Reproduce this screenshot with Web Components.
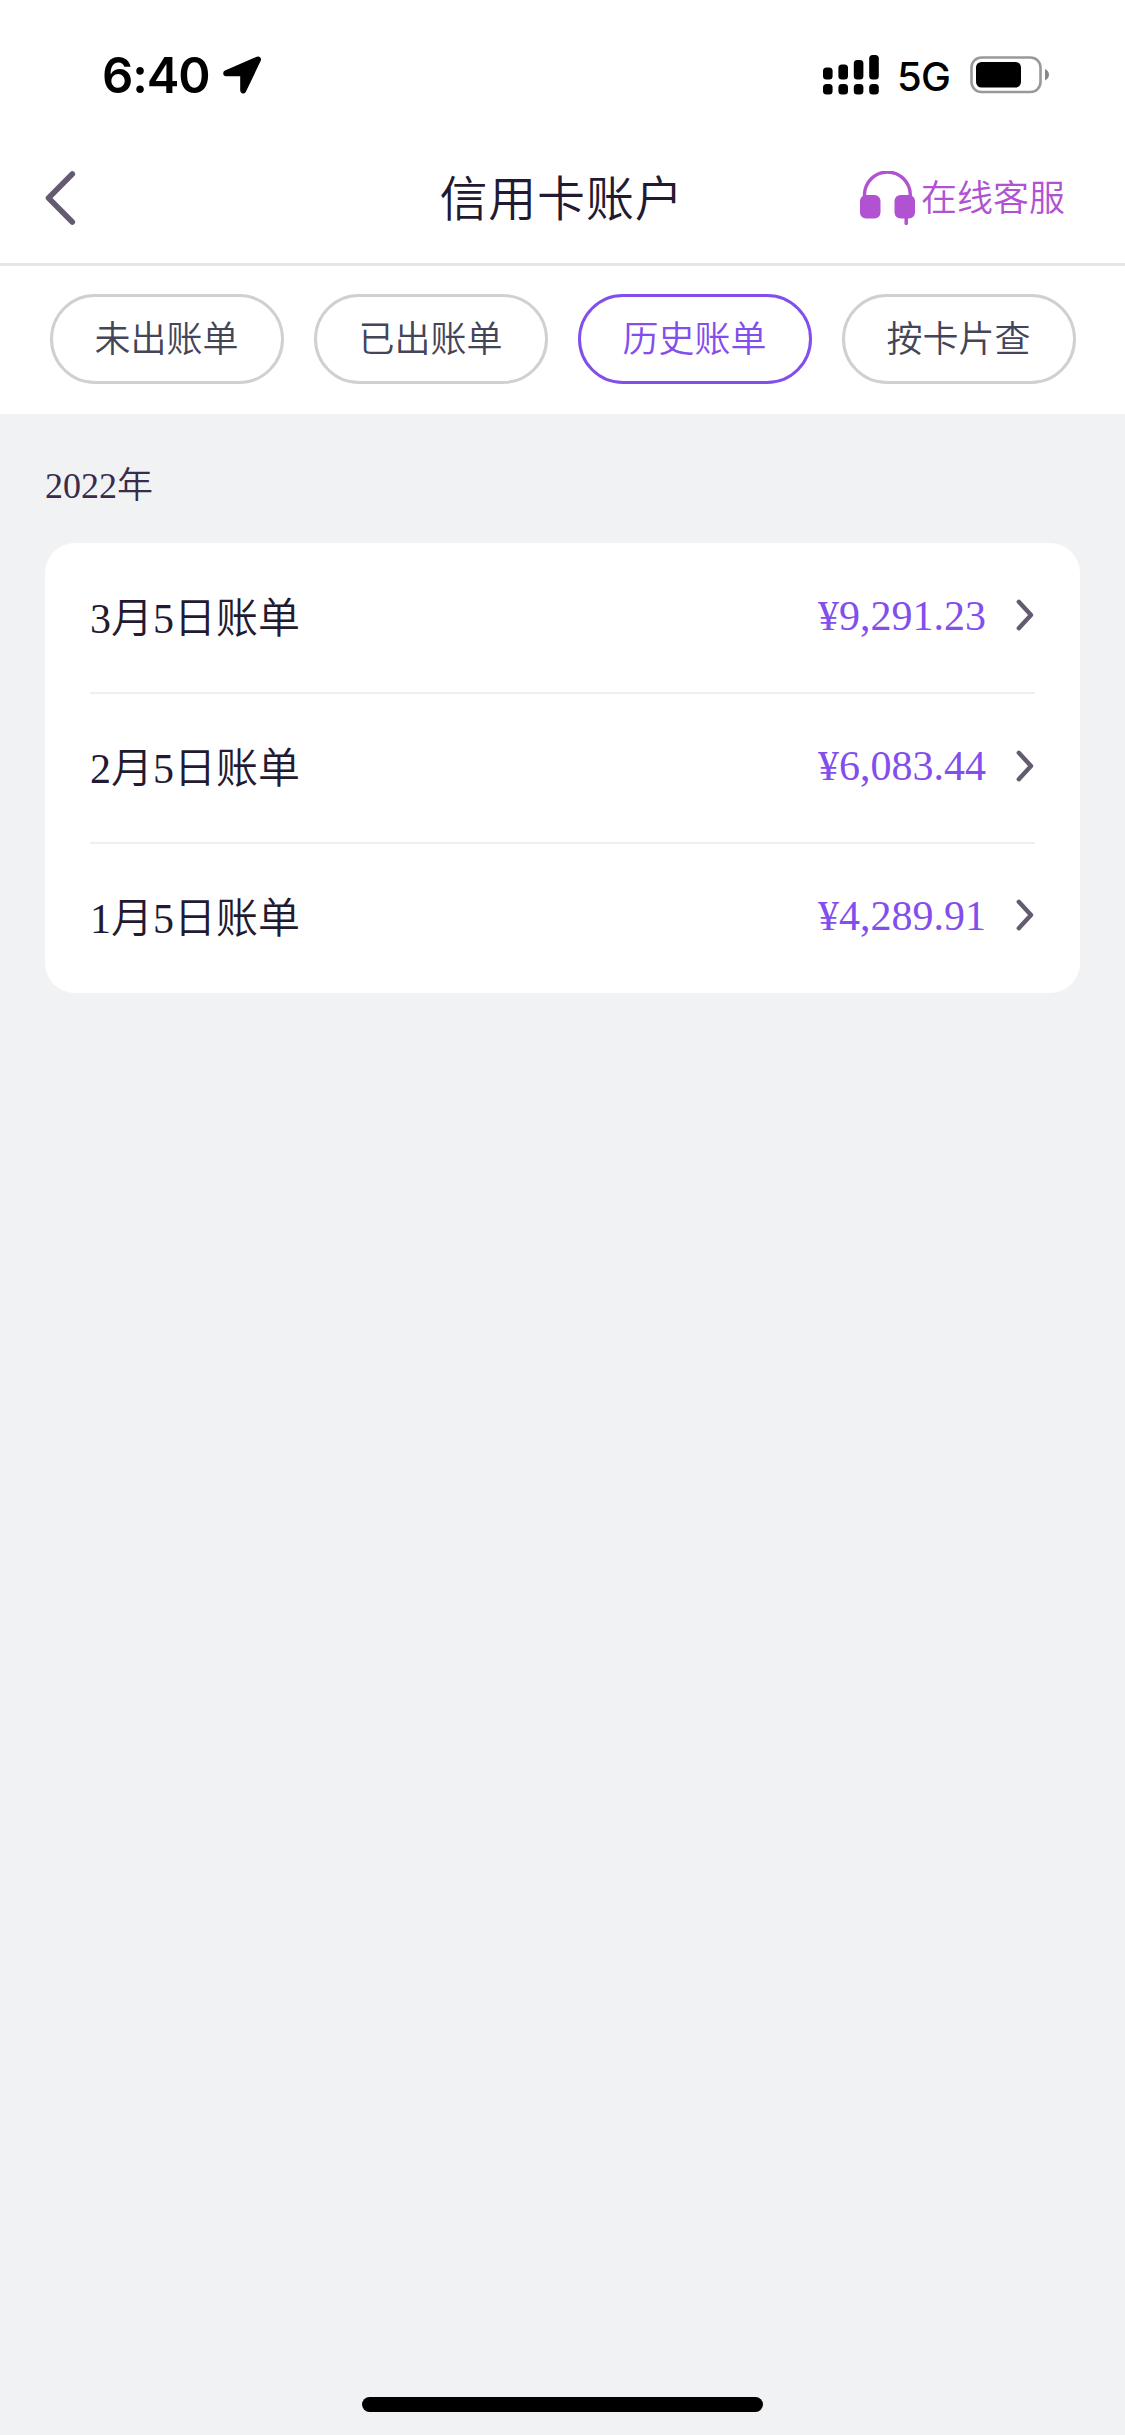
<!DOCTYPE html>
<html lang="zh-CN">
<head>
<meta charset="utf-8">
<meta name="viewport" content="width=device-width">
<title>信用卡账户</title>
<style>
html, body { margin: 0; padding: 0; }
body { background: #f1f2f4; font-family: "Liberation Serif", "Noto Sans CJK SC", serif; font-weight: 350; }
</style>
</head>
<body>
<account-page>
  <status-bar slot="top" time="6:40" network="5G"></status-bar>
  <nav-header slot="top">信用卡账户<span slot="action">在线客服</span></nav-header>
  <tab-bar slot="top">
    <tab-pill>未出账单</tab-pill>
    <tab-pill>已出账单</tab-pill>
    <tab-pill active>历史账单</tab-pill>
    <tab-pill>按卡片查</tab-pill>
  </tab-bar>
  <bill-group>
    <span slot="year">2022年</span>
    <bill-row amount="¥9,291.23">3月5日账单</bill-row>
    <bill-row amount="¥6,083.44">2月5日账单</bill-row>
    <bill-row amount="¥4,289.91">1月5日账单</bill-row>
  </bill-group>
</account-page>
<script>
function define(name, render) {
  customElements.define(name, class extends HTMLElement {
    constructor() {
      super();
      this.attachShadow({ mode: 'open' });
    }
    connectedCallback() {
      this.shadowRoot.innerHTML = render(this);
    }
  });
}

define('account-page', () => `
<style>
:host { display: flex; flex-direction: column; height: 2435px; background: #f1f2f4; overflow: hidden; }
.top { background: #fff; height: 414px; flex: none; }
main { flex: 1; }
.home { width: 401px; height: 15px; border-radius: 8px; background: #000; margin: 0 auto 23px; }
</style>
<div class="top"><slot name="top"></slot></div>
<main><slot></slot></main>
<div class="home"></div>`);

define('status-bar', el => `
<style>
:host { display: flex; height: 132px; box-sizing: border-box; padding: 0 75px 0 102px; justify-content: space-between; font-family: Inter, sans-serif; color: #000; }
div { display: flex; align-items: center; height: 150px; }
.time { font-size: 49px; font-weight: 600; letter-spacing: -1.1px; width: 107px; white-space: nowrap; }
.net { font-size: 40px; font-weight: 500; margin: 2px 0 0 18px; letter-spacing: -0.8px; width: 54px; }
.loc { margin-left: 14px; }
.bat { margin-left: 19px; }
svg { display: block; flex: none; }
</style>
<div><span class="time">${el.getAttribute('time')}</span>
<svg class="loc" width="40" height="38" viewBox="0 0 40 38"><path d="M3.200 17.200 35 3.500 20.200 34.500V17.200Z" stroke="#000" stroke-width="6" stroke-linejoin="round"/></svg></div>
<div>
<svg width="56" height="40" viewBox="0 0 56 40"><rect y="12.500" width="9.600" height="12" rx="3.500"/><rect x="15.400" y="9.500" width="9.600" height="15" rx="3.500"/><rect x="30.800" y="5" width="9.600" height="19.500" rx="3.500"/><rect x="46.200" y="0" width="9.600" height="24.500" rx="3.500"/><g><rect y="29" width="9.600" height="10.500" rx="3.500"/><rect x="15.400" y="29" width="9.600" height="10.500" rx="3.500"/><rect x="30.800" y="29" width="9.600" height="10.500" rx="3.500"/><rect x="46.200" y="29" width="9.600" height="10.500" rx="3.500"/></g></svg>
<span class="net">${el.getAttribute('network')}</span>
<svg class="bat" width="80" height="38" viewBox="0 0 80 38"><rect x="1.500" y="1.500" width="69" height="34.500" rx="10" fill="none" stroke="#999" stroke-width="2.600"/><rect x="6" y="6" width="45" height="25.500" rx="5.500"/><path d="M75 13q4 2 4 5.700t-4 5.700z" fill="#888"/></svg>
</div>`);

define('nav-header', () => `
<style>
:host { display: grid; grid-template-columns: 300px 1fr 300px; align-items: center; height: 134px; box-sizing: border-box; padding: 0 60px 0 45px; border-bottom: 3px solid #e6e6e8; color: #231a31; }
.title { font-size: 48px; letter-spacing: .8px; line-height: 72px; text-align: center; padding: 4px 0 0 13px; }
.action { display: flex; justify-content: flex-end; align-items: center; color: #b052d1; font-size: 36px; line-height: 54px; padding-top: 3px; }
.action svg { margin: 0 6px 2px 0; }
svg { display: block; }
</style>
<svg width="32" height="56" viewBox="0 0 32 56" fill="none" stroke="#655b70" stroke-width="5.600" stroke-linecap="round" stroke-linejoin="round"><path d="M27.300 4 3.500 28l23.800 24"/></svg>
<span class="title"><slot></slot></span>
<span class="action"><svg width="55" height="55" viewBox="0 0 55 55"><path d="M4.500 26V24a22.900 22.900 0 0 1 45.800 0v2" fill="none" stroke="#b052d1" stroke-width="3.400"/><rect x="0" y="24" width="20.500" height="23.500" rx="6" fill="#b052d1"/><rect x="34.500" y="24" width="20.500" height="23.500" rx="6" fill="#b052d1"/><path d="M46.200 45v7.500" stroke="#b052d1" stroke-width="3.500" stroke-linecap="round"/></svg><slot name="action"></slot></span>`);

define('tab-bar', () => `
<style>
:host { display: flex; gap: 30px; padding: 28px 49px 30px 50px; }
</style>
<slot></slot>`);

define('tab-pill', () => `
<style>
:host { display: flex; flex: 1; height: 90px; box-sizing: border-box; border: 3px solid #cfcfd4; border-radius: 45px; align-items: center; justify-content: center; font-size: 36px; color: #434559; padding: 0 1px 7px 0; }
:host([active]) { border-color: #824eec; color: #824eec; }
</style>
<slot></slot>`);

define('bill-group', () => `
<style>
:host { display: block; padding: 43px 45px 0; }
.year { height: 58px; line-height: 58px; font-size: 36px; color: #3a2b4b; margin-bottom: 28px; }
.card { background: #fff; border-radius: 30px; padding: 0 45px; height: 450px; }
</style>
<div class="year"><slot name="year"></slot></div>
<div class="card"><slot></slot></div>`);

define('bill-row', el => `
<style>
:host { display: flex; align-items: center; height: 150px; box-sizing: border-box; border-bottom: 2px solid #eeeff1; font-size: 42px; line-height: 60px; color: #231a31; }
:host(:first-child), :host(:nth-child(2)) { height: 151px; }
:host(:nth-of-type(2)) { height: 150px; }
:host(:last-child) { border-bottom-color: transparent; height: 149px; }
.name { padding-top: 2px; }
.amount { margin-left: auto; margin-right: 30px; color: #824eec; padding-bottom: 4px; }
svg { display: block; margin: 0 1px 5px 0; }
</style>
<span class="name"><slot></slot></span>
<span class="amount">${el.getAttribute('amount')}</span>
<svg width="18" height="32" viewBox="0 0 18 32" fill="none" stroke="#655b70" stroke-width="4.400" stroke-linecap="round" stroke-linejoin="round"><path d="M2.800 2.800 15 16 2.800 29.200"/></svg>`);
</script>
</body>
</html>
